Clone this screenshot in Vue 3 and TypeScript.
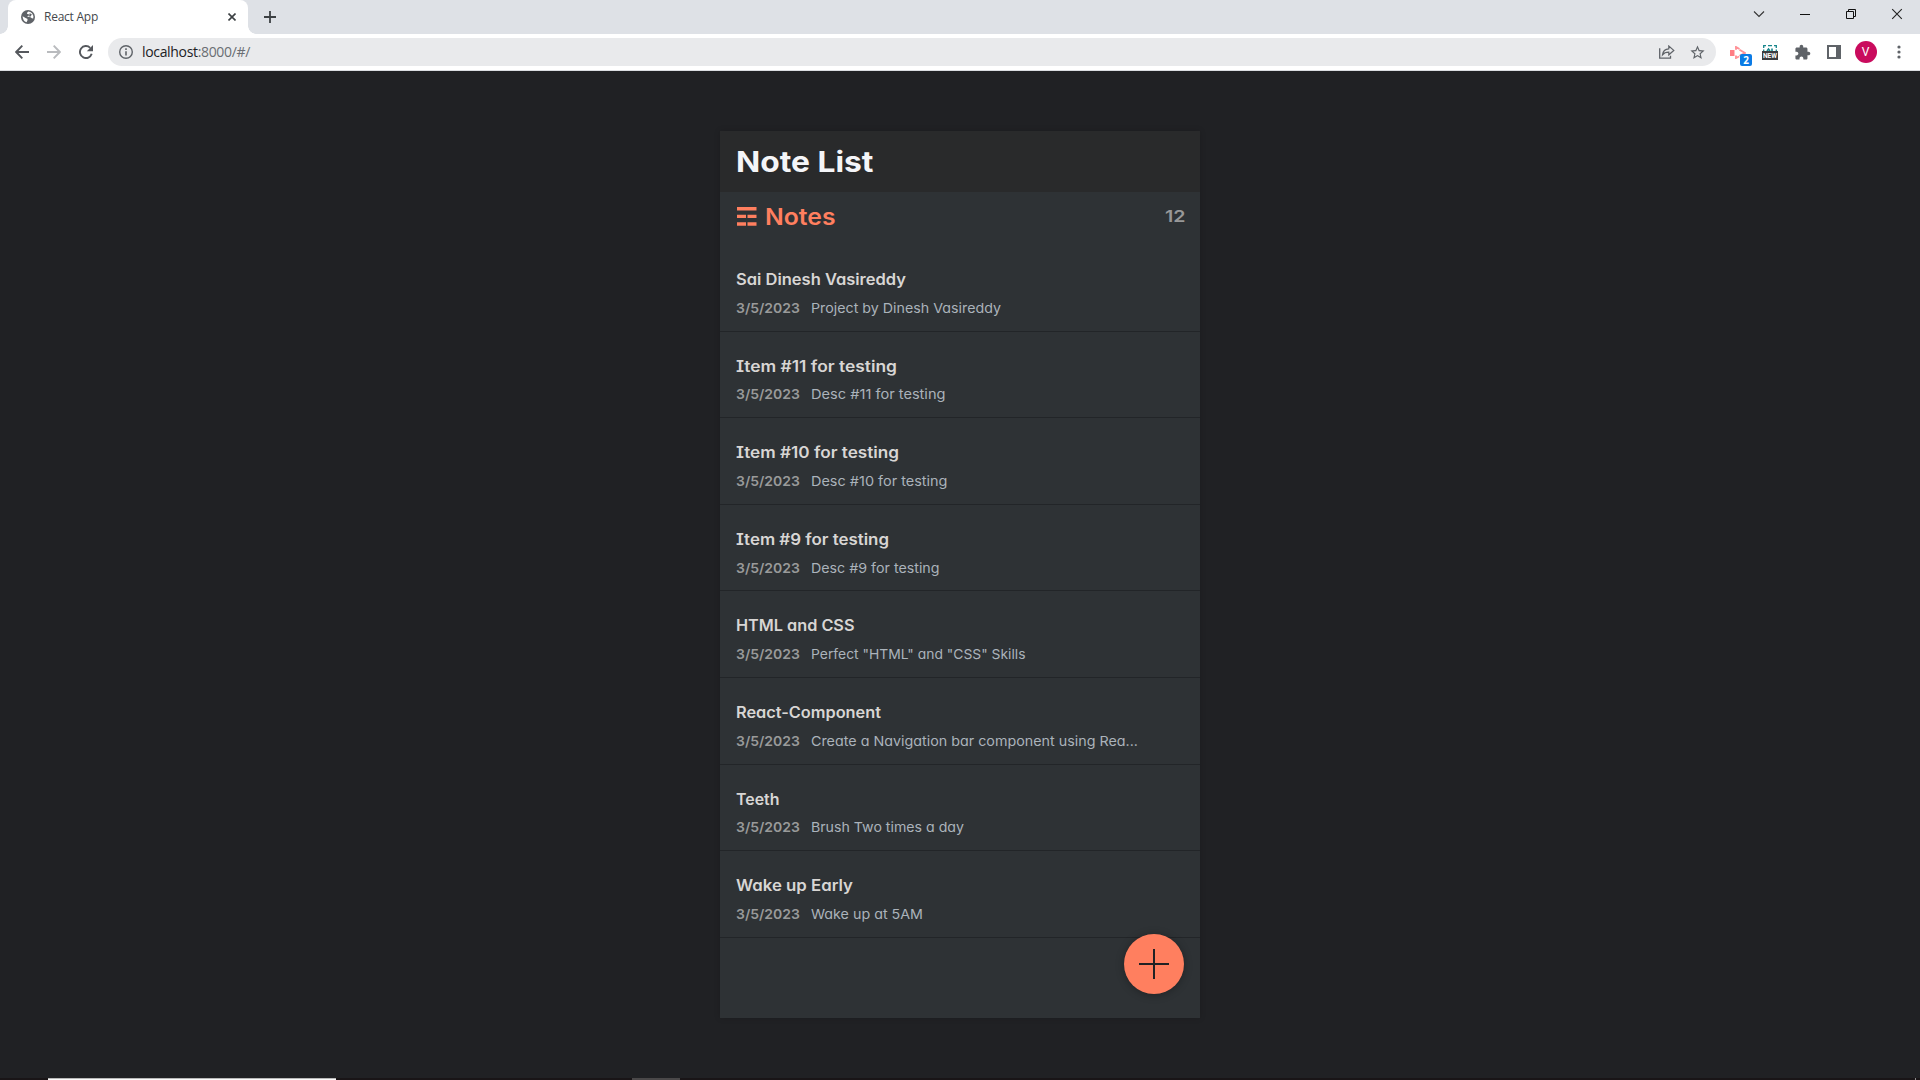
<script setup lang="ts">
import type { Directive } from 'vue'

interface Note {
  title: string
  titleWidth: number
  date: string
  body: string
  bodyWidth: number
}

const notes: Note[] = [
  { title: 'Sai Dinesh Vasireddy', titleWidth: 170, date: '3/5/2023', body: 'Project by Dinesh Vasireddy', bodyWidth: 190 },
  { title: 'Item #11 for testing', titleWidth: 161, date: '3/5/2023', body: 'Desc #11 for testing', bodyWidth: 134.5 },
  { title: 'Item #10 for testing', titleWidth: 163, date: '3/5/2023', body: 'Desc #10 for testing', bodyWidth: 136.5 },
  { title: 'Item #9 for testing', titleWidth: 153, date: '3/5/2023', body: 'Desc #9 for testing', bodyWidth: 128.5 },
  { title: 'HTML and CSS', titleWidth: 118.5, date: '3/5/2023', body: 'Perfect "HTML" and "CSS" Skills', bodyWidth: 214.5 },
  { title: 'React-Component', titleWidth: 145, date: '3/5/2023', body: 'Create a Navigation bar component using Rea...', bodyWidth: 327 },
  { title: 'Teeth', titleWidth: 43.5, date: '3/5/2023', body: 'Brush Two times a day', bodyWidth: 153 },
  { title: 'Wake up Early', titleWidth: 117, date: '3/5/2023', body: 'Wake up at 5AM', bodyWidth: 112 },
]

// Tracks a label so that its advance equals the given width in pixels.
const vFit: Directive<HTMLElement, number> = {
  mounted(el, { value }) {
    const natural = el.getBoundingClientRect().width
    const count = (el.textContent ?? '').length
    el.style.letterSpacing = `${(value - natural) / count}px`
  },
}

// Widens the letterforms themselves until the label spans the given width.
const vStretch: Directive<HTMLElement, number> = {
  mounted(el, { value }) {
    el.style.transform = `scaleX(${value / el.getBoundingClientRect().width})`
  },
}
</script>

<template>
  <div class="screen">
    <div class="tabstrip">
      <div class="tab">
        <svg class="globe" width="14" height="14" viewBox="0 0 14 14">
          <circle cx="7" cy="7" r="7" fill="#5f6368" />
          <path d="M1.6 6.2 L5 8.2 Q6.8 8.4 6.6 10 L5.6 12.2 Q1.8 11 1.6 6.2 Z M7.2 1.4 Q5.6 2.6 6 3.8 L8.2 4.4 Q8 6.2 5.8 6.6 L9.6 7.2 Q10.8 8.6 12.2 8.6 Q13 5.6 11 3.2 Q9.4 1.5 7.2 1.4 Z" fill="#fff" />
          <path d="M8.6 3.2 L10.8 4.2 L9.8 6.4 L8 6.4 Z" fill="#5f6368" />
        </svg>
        <span class="tab-label"><span v-fit="54">React App</span></span>
        <svg class="tab-close" width="8" height="8" viewBox="0 0 8 8"><path d="M.5 .5 L7.5 7.5 M7.5 .5 L.5 7.5" stroke="#3c4043" stroke-width="1.6" /></svg>
      </div>
      <svg class="new-tab" width="12" height="12" viewBox="0 0 12 12"><path d="M6 0 V12 M0 6 H12" stroke="#3c4043" stroke-width="1.8" /></svg>
      <div class="window-controls">
        <svg width="46" height="28" viewBox="0 0 46 28"><path d="M18 11.500 L23 16.500 L28 11.500" fill="none" stroke="#333" stroke-width="1.1" /></svg>
        <svg width="46" height="28" viewBox="0 0 46 28"><path d="M18 14.5 H28" stroke="#111" /></svg>
        <svg width="46" height="28" viewBox="0 0 46 28"><path d="M18.5 11.5 H25.5 V18.5 H18.5 Z M20.5 11.5 V9.5 H27.5 V16.5 H25.5" fill="none" stroke="#111" /></svg>
        <svg width="46" height="28" viewBox="0 0 46 28"><path d="M18.2 9.2 L27.8 18.8 M27.8 9.2 L18.2 18.8" stroke="#222" stroke-width="1.1" /></svg>
      </div>
    </div>

    <div class="toolbar">
      <div class="nav">
        <svg width="14" height="14" viewBox="0 0 14 14"><path d="M14 7 H1.5 M7.3 .7 L1.2 7 L7.3 13.3" fill="none" stroke="#55585d" stroke-width="1.9" /></svg>
        <svg width="14" height="14" viewBox="0 0 14 14"><path d="M0 7 H12.5 M6.7 .7 L12.8 7 L6.7 13.3" fill="none" stroke="#b9bbbe" stroke-width="1.9" /></svg>
        <svg width="14" height="14" viewBox="0 0 14 14"><path d="M12.7 8.8 A6 6 0 1 1 11.2 2.8" fill="none" stroke="#55585d" stroke-width="1.9" /><path d="M14 0 V6.2 H7.8 Z" fill="#55585d" /></svg>
      </div>
      <div class="omnibox">
        <svg class="info" width="14" height="14" viewBox="0 0 14 14"><circle cx="7" cy="7" r="6.3" fill="none" stroke="#5f6368" stroke-width="1.4" /><path d="M7 6.2 V10.6 M7 3.3 V4.9" stroke="#5f6368" stroke-width="1.6" /></svg>
        <span class="url"><span v-fit="108">localhost<span class="url-rest">:8000/#/</span></span></span>
        <svg class="share" width="16" height="14" viewBox="0 0 16 14"><path d="M.7 3.3 V13.2 H11.5 V10.8" fill="none" stroke="#5f6368" stroke-width="1.3" /><path d="M3.5 9.8 Q4.2 4.2 9.8 3.8 V1 L14.8 5.4 L9.8 9.8 V7.2 Q5.6 7.2 3.5 9.8 Z" fill="none" stroke="#5f6368" stroke-width="1.2" /></svg>
        <svg class="star" width="17" height="17" viewBox="0 0 24 24"><path fill="#5f6368" d="M22 9.24l-7.19-.62L12 2 9.19 8.63 2 9.24l5.46 4.73L5.82 21 12 17.27 18.18 21l-1.63-7.03L22 9.24zM12 15.4l-3.76 2.27 1-4.28-3.32-2.88 4.38-.38L12 6.1l1.71 4.04 4.38.38-3.32 2.88 1 4.28L12 15.4z" /></svg>
      </div>
      <div class="extensions">
        <div class="ext recorder">
          <svg width="16" height="13" viewBox="0 0 16 13"><path d="M0 4 H4.500 V10 H0 Z" fill="#ff7d84" /><path d="M6 3.800 V1 L9.500 3 M9.500 3.800 L15 7 L9.500 9.800 M6 9.500 V12 L9 10.500" fill="none" stroke="#ff9297" stroke-width="1.900" /></svg>
          <span class="badge">2</span>
        </div>
        <div class="ext capture">
          <svg width="14" height="6" viewBox="0 0 14 6"><path d="M.7 3 V.7 H3 M5 .7 H9 M11 .7 H13.3 V3 M.7 4.500 V6 M13.3 4.500 V6" fill="none" stroke="#16858b" stroke-width="1.3" /><path d="M4 6 L5.500 4 L7 6 M9 3.5 V6" fill="none" stroke="#16858b" stroke-width="1.6" /></svg>
          <span class="new-label"><span v-stretch="14">NEW</span></span>
        </div>
        <svg class="puzzle" width="17" height="17" viewBox="0 0 24 24"><path fill="#5f6368" d="M20.5 11H19V7c0-1.1-.9-2-2-2h-4V3.500C13 2.120 11.880 1 10.500 1S8 2.120 8 3.500V5H4c-1.100 0-1.990.9-1.990 2v3.800H3.500c1.490 0 2.700 1.210 2.700 2.700s-1.210 2.700-2.700 2.700H2V20c0 1.100.9 2 2 2h3.800v-1.500c0-1.490 1.210-2.700 2.700-2.700 1.490 0 2.700 1.210 2.700 2.700V22H17c1.100 0 2-.9 2-2v-4h1.500c1.380 0 2.500-1.120 2.500-2.500S21.880 11 20.500 11z" /></svg>
        <svg class="side-panel" width="14" height="14" viewBox="0 0 14 14"><path fill="#5f6368" fill-rule="evenodd" d="M0 0 H14 V14 H0 Z M2 2 V12 H9 V2 Z" /></svg>
        <span class="avatar">V</span>
        <svg class="menu" width="4" height="14" viewBox="0 0 4 14"><g fill="#5f6368"><circle cx="2" cy="2" r="1.6" /><circle cx="2" cy="7" r="1.6" /><circle cx="2" cy="12" r="1.6" /></g></svg>
      </div>
    </div>

    <main class="page">
      <section class="app">
        <header class="app-header"><h1><span v-stretch="137.500">Note List</span></h1></header>
        <div class="notes-header">
          <svg class="trigram" width="20" height="19" viewBox="0 0 20 19"><path d="M0 0 H19.500 V3.500 H0 Z M0 7.700 H9 V11 H0 Z M10.500 7.700 H19.500 V11 H10.500 Z M0 15.300 H9 V18.700 H0 Z M10.500 15.300 H19.500 V18.700 H10.500 Z" fill="#ff7f5f" /></svg>
          <h2><span v-stretch="70.500">Notes</span></h2>
          <p class="count"><span v-stretch="20.500">12</span></p>
        </div>
        <div class="list">
          <article v-for="note in notes" :key="note.title" class="note">
            <h3><span v-stretch="note.titleWidth">{{ note.title }}</span></h3>
            <p><span class="date"><span v-stretch="64">{{ note.date }}</span></span><span v-stretch="note.bodyWidth" class="body">{{ note.body }}</span></p>
          </article>
        </div>
        <button class="add" type="button" aria-label="Add note">
          <svg width="30" height="30" viewBox="0 0 30 30"><path d="M15 0 V30 M0 15 H30" stroke="#202124" stroke-width="2" /></svg>
        </button>
      </section>
    </main>
    <div class="taskbar"><i class="task-active"></i><i class="task-idle"></i><i class="task-edge"></i></div>
  </div>
</template>

<style>
body {
  margin: 0;
  overflow: hidden;
}
</style>

<style scoped>
* {
  box-sizing: border-box;
}
svg {
  display: block;
  flex: none;
}
span {
  white-space: nowrap;
}
.screen {
  width: 1920px;
  height: 1080px;
  display: flex;
  flex-direction: column;
  overflow: hidden;
  background: #202124;
  font-family: Inter, sans-serif;
}
.tabstrip {
  flex: none;
  height: 34px;
  background: #dee1e6;
  display: flex;
  align-items: flex-start;
}
.tab {
  position: relative;
  width: 240px;
  height: 34px;
  margin-left: 8px;
  padding: 0 12px 0 13px;
  background: #fff;
  border-radius: 8px 8px 0 0;
  display: flex;
  align-items: center;
}
.tab::before,
.tab::after {
  content: '';
  position: absolute;
  bottom: 0;
  width: 8px;
  height: 8px;
}
.tab::before {
  left: -8px;
  background: radial-gradient(circle at 0 0, transparent 7.5px, #fff 8px);
}
.tab::after {
  right: -8px;
  background: radial-gradient(circle at 100% 0, transparent 7.5px, #fff 8px);
}
.tab-label {
  margin-left: 9px;
  font: 12px/16px 'Open Sans', sans-serif;
  color: #45484c;
}
.tab-close {
  margin-left: auto;
}
.new-tab {
  margin: 11px 0 0 16px;
}
.window-controls {
  display: flex;
  margin-left: auto;
}
.toolbar {
  flex: none;
  height: 37px;
  background: #fff;
  border-bottom: 1px solid #dadce0;
  display: flex;
  align-items: center;
  padding: 0 20px 0 15px;
}
.nav {
  display: flex;
  gap: 18px;
}
.omnibox {
  flex: 1;
  height: 28px;
  margin-left: 15px;
  padding: 0 10px 0 11px;
  border-radius: 14px;
  background: #e9eaec;
  display: flex;
  align-items: center;
}
.url {
  margin-left: 9px;
  font: 14px/18px 'Open Sans', sans-serif;
  color: #202124;
}
.url-rest {
  color: #6a6e73;
}
.share {
  margin-left: auto;
}
.star {
  margin-left: 14.5px;
}
.extensions {
  display: flex;
  align-items: center;
  width: 184px;
  height: 36px;
}
.ext {
  position: relative;
  flex: none;
}
.recorder {
  margin-left: 14px;
}
.badge {
  position: absolute;
  left: 10px;
  top: 8px;
  width: 12px;
  height: 12px;
  border-radius: 2px;
  background: #0b7be5;
  color: #fff;
  font: 700 10px/12px 'Open Sans', sans-serif;
  text-align: center;
}
.capture {
  width: 16px;
  margin-left: 16px;
  display: flex;
  flex-direction: column;
  align-items: center;
}
.new-label {
  display: flex;
  justify-content: flex-start;
  width: 16px;
  height: 9px;
  padding-left: 1px;
  background: #3b3d40;
  color: #fff;
  font: 700 8px/9px Roboto, sans-serif;
}
.new-label span {
  transform-origin: 0 50%;
}
.puzzle {
  margin-left: 16px;
}
.side-panel {
  margin-left: 15.5px;
}
.avatar {
  flex: none;
  width: 22px;
  height: 22px;
  margin-left: 14px;
  border-radius: 50%;
  background: #c90b5d;
  color: #fff;
  font: 12px/22px Roboto, sans-serif;
  text-align: center;
}
.menu {
  margin-left: 20px;
}
.page {
  flex: 1;
  display: flex;
  justify-content: center;
  align-items: flex-start;
  padding-top: 60px;
}
.app {
  position: relative;
  width: 480px;
  height: 887px;
  background: #2e3235;
  box-shadow: 0 0 6px rgba(0, 0, 0, 0.16);
  font-feature-settings: 'cv11', 'cv08';
}
.app span {
  display: inline-block;
  transform-origin: 0 50%;
}
h1,
h2,
h3,
p {
  margin: 0;
}
.app-header {
  height: 61px;
  padding: 11px 16px 0;
  background: #292a2b;
}
h1 {
  font-size: 29px;
  line-height: 40px;
  font-weight: 700;
  color: #f4f5f8;
}
.notes-header {
  display: flex;
  align-items: flex-start;
  height: 53.1px;
  padding: 0 16px;
}
.trigram {
  margin: 15.4px 0 0 1.3px;
}
h2 {
  margin: 9.5px 0 0 8px;
  font-size: 23.3px;
  line-height: 30px;
  font-weight: 600;
  color: #ff7f5f;
}
.count {
  width: 19.5px;
  margin: 14px 0 0 auto;
  font-size: 16.5px;
  line-height: 20px;
  font-weight: 600;
  color: #989898;
}
.note {
  height: 86.6px;
  padding: 24.95px 16px 0;
  border-bottom: 1px solid #222528;
}
h3 {
  font-size: 15.4px;
  line-height: 20px;
  font-weight: 600;
  color: #d8d6d4;
}
.note p {
  display: flex;
  margin-top: 7.85px;
  font-size: 13.6px;
  line-height: 20px;
}
.date {
  width: 75.3px;
  font-weight: 600;
  color: #999a9a;
}
.body {
  color: #abb3bb;
}
.add {
  position: absolute;
  right: 16px;
  bottom: 24px;
  width: 60px;
  height: 60px;
  padding: 0;
  border: 0;
  border-radius: 50%;
  background: #ff7f5f;
  box-shadow: 0 1px 8px rgba(0, 0, 0, 0.3);
  display: flex;
  align-items: center;
  justify-content: center;
}
.taskbar {
  flex: none;
  height: 2px;
  background: #191517;
  display: flex;
}
.task-active {
  width: 288px;
  margin-left: 48px;
  background: #fbfbfb;
  border-top: 1px solid #b9b9b9;
}
.task-idle {
  width: 48px;
  margin-left: 296px;
  background: #4a4849;
}
.task-edge {
  width: 1px;
  margin: 0 4px 0 auto;
  background: #8a8889;
}
</style>
